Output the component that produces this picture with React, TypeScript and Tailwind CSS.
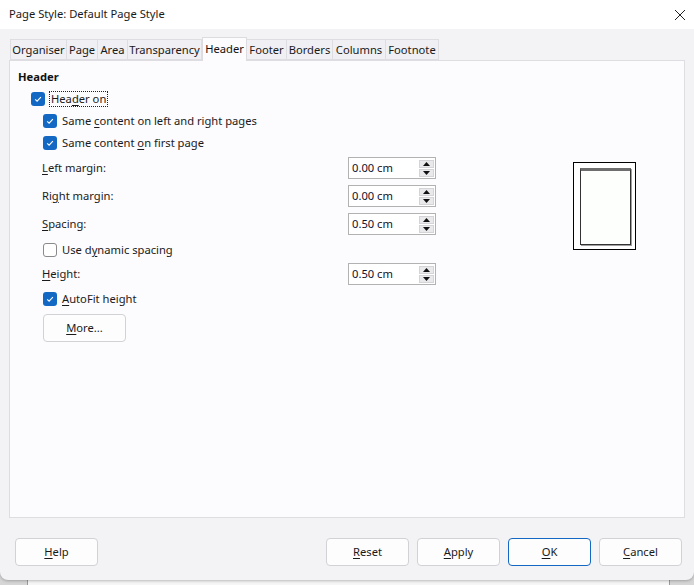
import React from 'react';

const font = { fontFamily: '"Noto Sans", "Liberation Sans", sans-serif' };

const U = ({ children }: { children: React.ReactNode }) => <span className="underline underline-offset-2">{children}</span>;

const Check = ({ checked }: { checked: boolean }) =>
  checked ? (
    <span className="w-[14px] h-[14px] rounded-[3px] bg-[#1368c4] flex items-center justify-center shrink-0">
      <svg width="14" height="14" viewBox="0 0 14 14">
        <path d="M4.2 7.3 L6.1 9.2 L9.9 5.2" fill="none" stroke="white" strokeWidth="1.1" />
      </svg>
    </span>
  ) : (
    <span className="w-[14px] h-[14px] rounded-[3px] border border-[#8a8a8a] bg-white shrink-0" />
  );

const Spin = ({ value }: { value: string }) => (
  <div className="w-[88px] h-[22px] border border-[#b2b2b2] bg-white flex items-center justify-between pl-[3px] pr-[1px]">
    <span className="text-[11.2px] text-[#10102a]">{value}</span>
    <div className="w-[15px] h-[17px] flex flex-col gap-[1px]">
      <div className="flex-1 bg-[#e9e9ec] border border-[#d4d4d8] flex items-center justify-center">
        <svg width="7" height="4" viewBox="0 0 7 4"><path d="M3.5 0 L7 4 L0 4 Z" fill="#111" /></svg>
      </div>
      <div className="flex-1 bg-[#e9e9ec] border border-[#d4d4d8] flex items-center justify-center">
        <svg width="7" height="4" viewBox="0 0 7 4"><path d="M0 0 L7 0 L3.5 4 Z" fill="#111" /></svg>
      </div>
    </div>
  </div>
);

const Field = ({ label, value, mt }: { label: React.ReactNode; value: string; mt: string }) => (
  <div className={`${mt} h-[22px] flex items-center pl-[32px]`}>
    <span className="w-[306px] text-[11.2px] text-[#1a1a1a]">{label}</span>
    <Spin value={value} />
  </div>
);

const Btn = ({ children, primary }: { children: React.ReactNode; primary?: boolean }) => (
  <button
    className={`w-[83px] h-[28px] rounded-[4px] bg-[#fdfdfd] text-[11.2px] text-[#1a1a1a] border ${
      primary ? 'border-[#1368c4]' : 'border-[#d2d2d6]'
    }`}
  >
    {children}
  </button>
);

const tabs: [string, number][] = [
  ['Organiser', 57],
  ['Page', 31],
  ['Area', 30],
  ['Transparency', 74],
  ['Header', 45],
  ['Footer', 40],
  ['Borders', 46],
  ['Columns', 53],
  ['Footnote', 53],
];

const App: React.FC = () => {
  return (
    <div className="w-[694px] h-[585px] bg-[#d6d6d6] relative overflow-hidden" style={font}>
      {/* document behind the dialog */}
      <div className="absolute left-[27px] right-[24px] top-[575px] h-[20px] bg-[#f6f6f6] border-x border-[#9a9a9a]">
        <p className="pl-[16px] pt-[6px] text-[15px] text-[#222]" style={{ fontFamily: '"Liberation Serif", serif' }}>
          all into the dark range of mobile games, I should this always said tidal 25
        </p>
      </div>

      <div className="relative h-[580px] bg-[#f3f2f5] rounded-b-[8px] flex flex-col shadow-[0_1px_3px_rgba(0,0,0,0.25)]">
        <div className="h-[29px] bg-white flex items-center justify-between pl-[9px] pr-[8px]">
          <span className="text-[11.2px] text-[#1a1a1a]">Page Style: Default Page Style</span>
          <svg width="12" height="12" viewBox="0 0 12 12">
            <path d="M1 1 L11 11 M11 1 L1 11" stroke="#222" strokeWidth="1" />
          </svg>
        </div>

        <div className="pt-[8px] pl-[10px] flex items-end h-[31px]">
          {tabs.map(([t, w]) =>
            t === 'Header' ? (
              <div
                key={t}
                style={{ width: w }}
                className="h-[24px] -mb-[1px] bg-[#fcfbfd] border border-b-0 border-[#dcdbe0] text-[11.2px] text-[#111] text-center leading-[22px] relative z-10"
              >
                {t}
              </div>
            ) : (
              <div
                key={t}
                style={{ width: w }}
                className="h-[21px] bg-[#f0eff3] border border-[#dedde2] border-l-0 first:border-l text-[11.2px] text-[#1a1a1a] text-center leading-[20px]"
              >
                {t}
              </div>
            )
          )}
        </div>

        <div className="mx-[9px] h-[458px] bg-[#fcfbfd] border border-[#dedde2] flex">
          <div className="w-[545px] pt-[8px] flex flex-col">
            <div className="pl-[8px] h-[16px] leading-[16px] text-[11.2px] font-bold text-[#111]">Header</div>

            <div className="mt-[3px] h-[22px] flex items-center pl-[21px] gap-[4px]">
              <Check checked />
              <span className="border border-dotted border-[#222] px-[1px] leading-[14px] text-[11.2px] text-[#1a1a1a]">
                Hea<U>d</U>er on
              </span>
            </div>
            <div className="h-[22px] flex items-center pl-[33px] gap-[5px]">
              <Check checked />
              <span className="text-[11.2px] text-[#1a1a1a]">
                Same <U>c</U>ontent on left and right pages
              </span>
            </div>
            <div className="h-[22px] flex items-center pl-[33px] gap-[5px]">
              <Check checked />
              <span className="text-[11.2px] text-[#1a1a1a]">
                Same content <U>o</U>n first page
              </span>
            </div>

            <Field mt="mt-[3px]" label={<><U>L</U>eft margin:</>} value="0.00 cm" />
            <Field mt="mt-[6px]" label={<>Ri<U>g</U>ht margin:</>} value="0.00 cm" />
            <Field mt="mt-[6px]" label={<><U>S</U>pacing:</>} value="0.50 cm" />

            <div className="mt-[4px] h-[22px] flex items-center pl-[33px] gap-[5px]">
              <Check checked={false} />
              <span className="text-[11.2px] text-[#1a1a1a]">
                Use d<U>y</U>namic spacing
              </span>
            </div>

            <Field mt="mt-[2px]" label={<><U>H</U>eight:</>} value="0.50 cm" />

            <div className="mt-[3px] h-[22px] flex items-center pl-[33px] gap-[5px]">
              <Check checked />
              <span className="text-[11.2px] text-[#1a1a1a]">
                <U>A</U>utoFit height
              </span>
            </div>

            <div className="mt-[4px] pl-[33px]">
              <button className="w-[83px] h-[28px] rounded-[4px] bg-[#fdfdfd] border border-[#d2d2d6] text-[11.2px] text-[#1a1a1a]">
                <U>M</U>ore...
              </button>
            </div>
          </div>

          <div className="ml-[18px] mt-[101px]">
            <div className="w-[63px] h-[88px] border border-black bg-white pl-[6px] pt-[5px]">
              <div className="w-[51px] h-[77px] border border-[#333] border-t-[3px] border-t-[#6e6e6e] bg-[#fdfffd] shadow-[1px_1px_0_#a0a0a0]" />
            </div>
          </div>
        </div>

        <div className="mt-[20px] flex justify-between pl-[15px] pr-[12px]">
          <Btn>
            <U>H</U>elp
          </Btn>
          <div className="flex gap-[8px]">
            <Btn>
              <U>R</U>eset
            </Btn>
            <Btn>
              <U>A</U>pply
            </Btn>
            <Btn primary>
              <U>O</U>K
            </Btn>
            <Btn>
              <U>C</U>ancel
            </Btn>
          </div>
        </div>
      </div>
    </div>
  );
};

export default App;
